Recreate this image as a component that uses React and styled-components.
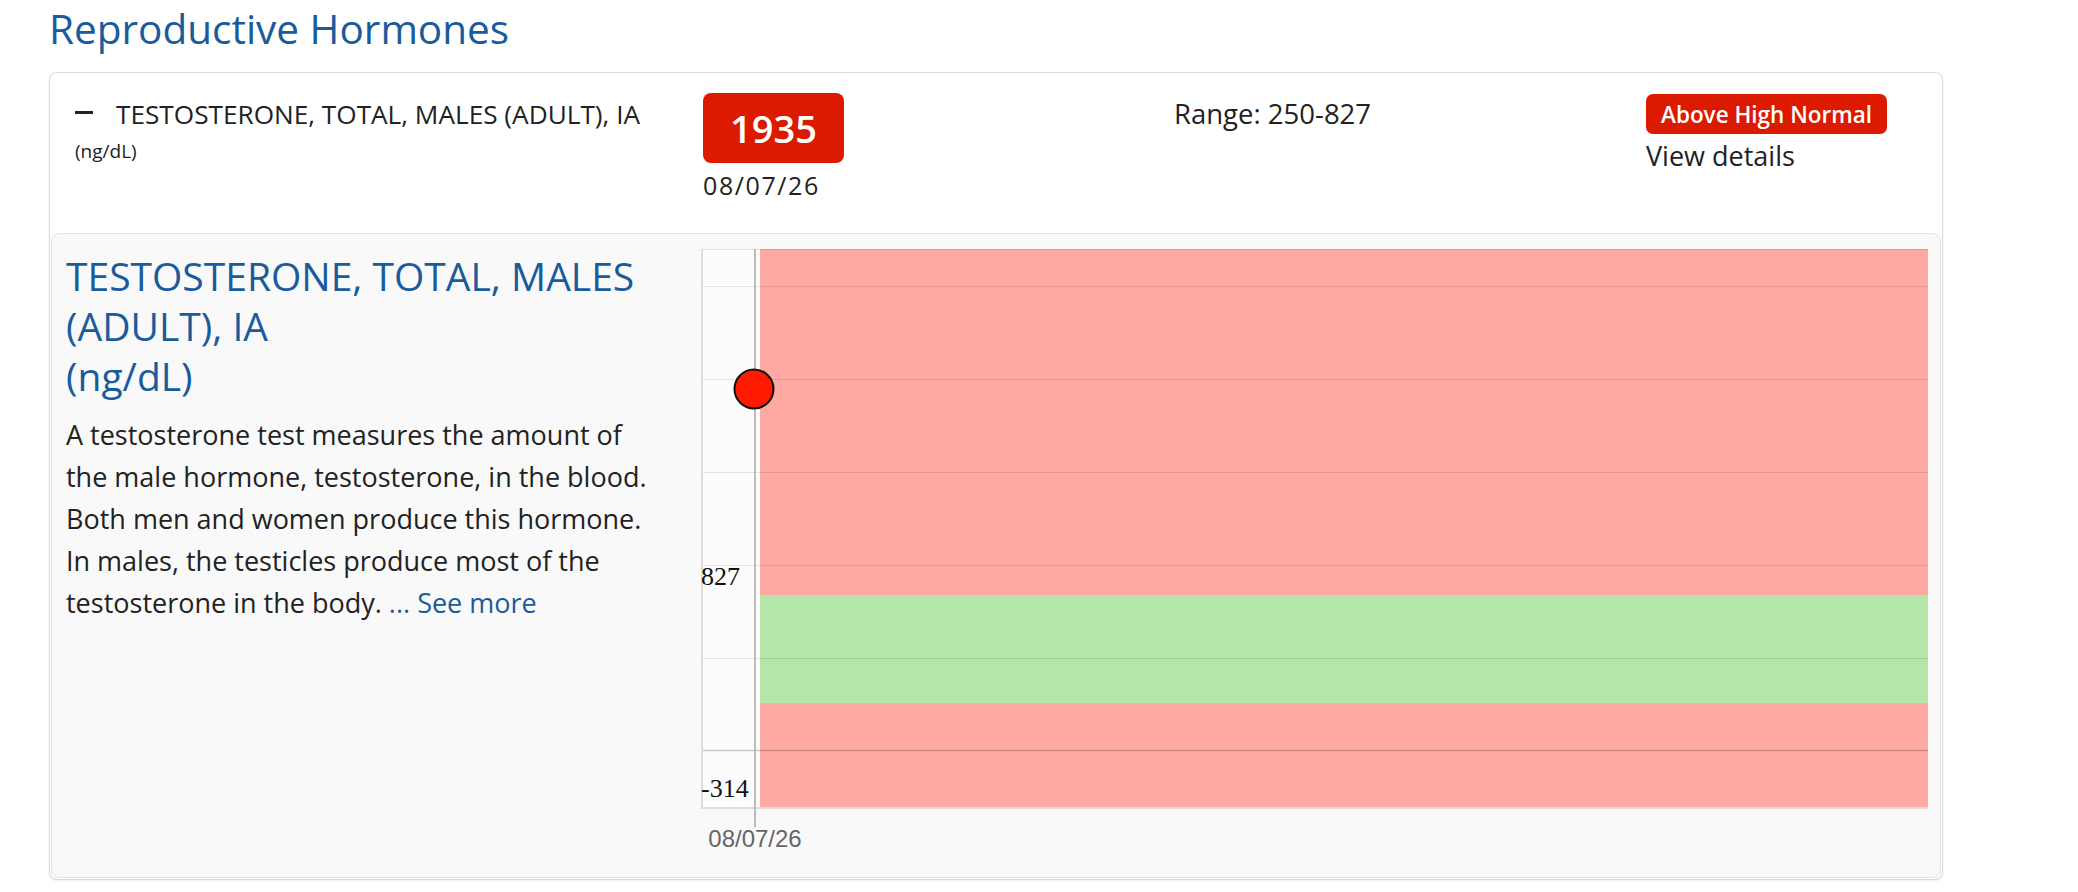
import React from "react";
import styled, { createGlobalStyle } from "styled-components";

const GlobalStyle = createGlobalStyle`
  body {
    margin: 0;
    background: #fff;
    font-family: "Open Sans", "Noto Sans", sans-serif;
    color: #222;
  }
`;

const Page = styled.div`
  padding: 5px 0 12px 49px;
`;

const SectionTitle = styled.h2`
  margin: 0 0 19px;
  font-size: 40.5px;
  line-height: 48px;
  font-weight: 450;
  color: #1a5b9c;
`;

const Card = styled.div`
  width: 1894px;
  box-sizing: border-box;
  border: 1px solid #d9d9d9;
  border-radius: 8px;
  box-shadow: 0 1px 2px rgba(0, 0, 0, 0.08);
  background: #fff;
`;

const Header = styled.div`
  height: 160px;
  box-sizing: border-box;
  padding: 20px 0 0 25px;
  display: grid;
  grid-template-columns: 628px 471px 472px 1fr;
  align-items: start;
`;

const NameCol = styled.div`
  padding-top: 6px;
`;

const NameRow = styled.div`
  display: flex;
  align-items: center;
  gap: 23px;
  font-size: 26.2px;
  line-height: 30px;
`;

const Minus = styled.span`
  width: 18px;
  height: 3px;
  background: #222;
  margin-top: -3px;
`;

const SmallUnit = styled.div`
  margin-top: 10px;
  font-size: 19px;
  line-height: 24px;
`;

const ValueBadge = styled.div`
  width: 141px;
  height: 70px;
  border-radius: 8px;
  background: #dc1a00;
  color: #fff;
  font-size: 38px;
  font-weight: 600;
  display: flex;
  align-items: center;
  justify-content: center;
`;

const DateText = styled.div`
  margin-top: 7px;
  font-size: 25px;
  line-height: 30px;
  letter-spacing: 1.6px;
`;

const RangeText = styled.div`
  margin-top: 6px;
  font-size: 27.5px;
  line-height: 30px;
`;

const StatusBadge = styled.div`
  display: inline-flex;
  align-items: center;
  height: 40px;
  margin-top: 1px;
  padding: 0 15px;
  border-radius: 7px;
  background: #dc1a00;
  color: #fff;
  font-size: 22.5px;
  font-weight: 600;
`;

const DetailsLink = styled.div`
  margin-top: 7px;
  font-size: 27px;
  line-height: 30px;
`;

const Panel = styled.div`
  margin: 0 1px 1px;
  border: 1px solid #e2e2e2;
  border-radius: 8px;
  background: #f9f9f9;
  padding: 15px 12px 23px;
  display: grid;
  grid-template-columns: 637px 1fr;
`;

const InfoCol = styled.div`
  padding-top: 2px;
  padding-left: 2px;
`;

const TestName = styled.h3`
  margin: 0;
  font-size: 39px;
  line-height: 50px;
  font-weight: 500;
  color: #1a5b9c;
`;

const Description = styled.p`
  margin: 13px 0 0;
  font-size: 27px;
  line-height: 42px;
  color: #222;
  white-space: nowrap;
`;

const SeeMore = styled.a`
  color: #1a5b9c;
  text-decoration: none;
`;

const ChartBox = styled.div`
  width: 1227px;
  svg {
    display: block;
  }
`;

const grid = [37, 130, 223, 316, 409];

function RangeChart() {
  return (
    <svg width="1227" height="605" viewBox="0 0 1227 605">
      <rect x="0" y="0" width="1227" height="559" fill="#fcfcfc" />
      <rect x="59" y="0" width="1168" height="346" fill="#ffa9a3" />
      <rect x="59" y="346" width="1168" height="108" fill="#b3e6a8" />
      <rect x="59" y="454" width="1168" height="105" fill="#ffa9a3" />
      <line x1="0" y1="0.5" x2="1227" y2="0.5" stroke="rgba(0,0,0,0.1)" />
      {grid.map((y) => (
        <line key={y} x1="0" y1={y + 0.5} x2="1227" y2={y + 0.5} stroke="rgba(0,0,0,0.1)" />
      ))}
      <line x1="0" y1="501.5" x2="1227" y2="501.5" stroke="rgba(0,0,0,0.2)" strokeWidth="1.5" />
      <line x1="0" y1="559" x2="1227" y2="559" stroke="#ddd" strokeWidth="2" />
      <line x1="1" y1="0" x2="1" y2="559" stroke="#ddd" strokeWidth="2" />
      <line x1="54" y1="0" x2="54" y2="578" stroke="#bbb" strokeWidth="2" />
      <text x="0" y="336" fontFamily="Liberation Serif, serif" fontSize="26" fill="#111">
        827
      </text>
      <text x="0" y="548" fontFamily="Liberation Serif, serif" fontSize="26" fill="#111">
        -314
      </text>
      <circle cx="53" cy="140" r="19.5" fill="#ff1a00" stroke="#111" strokeWidth="2" />
      <text
        x="54"
        y="598"
        textAnchor="middle"
        fontFamily="Liberation Sans, Arial, sans-serif"
        fontSize="24"
        fill="#666"
      >
        08/07/26
      </text>
    </svg>
  );
}

function App() {
  return (
    <Page>
      <GlobalStyle />
      <SectionTitle>Reproductive Hormones</SectionTitle>
      <Card>
        <Header>
          <NameCol>
            <NameRow>
              <Minus />
              <span>TESTOSTERONE, TOTAL, MALES (ADULT), IA</span>
            </NameRow>
            <SmallUnit>(ng/dL)</SmallUnit>
          </NameCol>
          <div>
            <ValueBadge>1935</ValueBadge>
            <DateText>08/07/26</DateText>
          </div>
          <RangeText>Range: 250-827</RangeText>
          <div>
            <StatusBadge>Above High Normal</StatusBadge>
            <DetailsLink>View details</DetailsLink>
          </div>
        </Header>
        <Panel>
          <InfoCol>
            <TestName>
              TESTOSTERONE, TOTAL, MALES
              <br />
              (ADULT), IA
              <br />
              (ng/dL)
            </TestName>
            <Description>
              A testosterone test measures the amount of
              <br />
              the male hormone, testosterone, in the blood.
              <br />
              Both men and women produce this hormone.
              <br />
              In males, the testicles produce most of the
              <br />
              testosterone in the body. <SeeMore href="#">... See more</SeeMore>
            </Description>
          </InfoCol>
          <ChartBox>
            <RangeChart />
          </ChartBox>
        </Panel>
      </Card>
    </Page>
  );
}

export default App;
